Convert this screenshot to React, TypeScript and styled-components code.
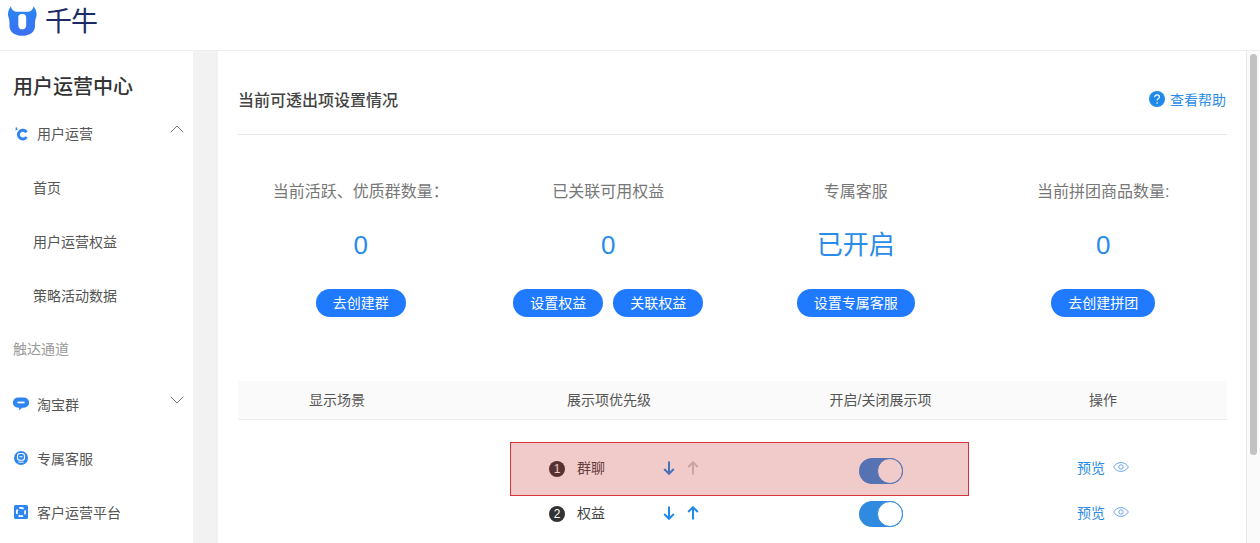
import * as React from 'react'
import styled, { createGlobalStyle } from 'styled-components'
import { ChevronDown, ChevronUp } from 'lucide-react'

const GlobalStyle = createGlobalStyle`
  html, body {
    margin: 0;
    padding: 0;
    height: 543px;
    overflow: hidden;
    background: #fff;
  }
  body {
    font-family: "Liberation Sans", "Noto Sans CJK SC", sans-serif;
    color: #333;
  }
`

const Page = styled.div`
  display: flex;
  flex-direction: column;
  width: 1260px;
  height: 543px;
  overflow: hidden;
`

const Header = styled.header`
  display: flex;
  flex: none;
  align-items: center;
  gap: 8px;
  height: 50px;
  padding: 0 0 9px 8px;
  box-sizing: border-box;
  box-shadow: 0 1px 0 #eee;
`

const Brand = styled.span`
  font-size: 27px;
  line-height: 32px;
  color: #1c2a66;
  letter-spacing: -1px;
  margin-top: 2px;
`

const Body = styled.div`
  display: flex;
  flex: 1;
  min-height: 0;
  margin-top: 1px;
  background: #f2f2f2;
`

const Sidebar = styled.aside`
  flex: none;
  width: 193px;
  background: #fff;
  padding-top: 21px;
  box-sizing: border-box;
`

const SideTitle = styled.div`
  font-size: 20px;
  line-height: 30px;
  font-weight: 500;
  color: #333;
  padding-left: 13px;
  margin-bottom: 4px;
`

const SideRow = styled.div<{ $sub?: boolean; $muted?: boolean }>`
  display: flex;
  align-items: center;
  box-sizing: border-box;
  height: ${(p) => (p.$muted ? '55px' : '54px')};
  padding-bottom: ${(p) => (p.$muted ? '3px' : '0')};
  font-size: 14px;
  color: ${(p) => (p.$muted ? '#999' : '#555')};
  padding-left: ${(p) => (p.$sub ? '33px' : '13px')};
  padding-right: 4px;
`

const SideIcon = styled.span`
  display: flex;
  justify-content: center;
  flex: none;
  width: 16px;
  margin-right: 8px;
`

const SideLabel = styled.span`
  flex: 1;
`

const Chevron = styled.span`
  display: flex;
  color: #777;
  margin-top: -8px;
`

const Main = styled.main`
  flex: 1;
  min-width: 0;
  margin-left: 25px;
  background: #fff;
  padding: 0 19px 0 20px;
  border-right: 1px solid #e8e8e8;
`

const TitleBar = styled.div`
  display: flex;
  align-items: center;
  justify-content: space-between;
  height: 70px;
  padding: 13px 1px 0 0;
  border-bottom: 1px solid #e6e6e6;
`

const Title = styled.h2`
  margin: 0;
  font-size: 16px;
  font-weight: 500;
  color: #444;
`

const HelpLink = styled.a`
  display: flex;
  align-items: center;
  gap: 5px;
  font-size: 14px;
  color: #2a8ce8;
`

const Stats = styled.div`
  display: grid;
  grid-template-columns: repeat(4, 1fr);
  margin-left: -1px;
  padding-top: 47px;
`

const Stat = styled.div`
  display: flex;
  flex-direction: column;
  align-items: center;
`

const StatLabel = styled.div`
  font-size: 16px;
  line-height: 20px;
  color: #777;
`

const StatValue = styled.div`
  font-size: 26px;
  line-height: 30px;
  margin: 28px 0 29px;
  color: #2a8ce8;
`

const ButtonRow = styled.div`
  display: flex;
  gap: 10px;
`

const PillButton = styled.button`
  height: 28px;
  padding: 0 17px;
  border: 0;
  border-radius: 14px;
  background: #1f7aff;
  color: #fff;
  font-family: inherit;
  font-size: 14px;
  line-height: 28px;
`

const Table = styled.div`
  position: relative;
  margin-top: 64px;
`

const HeadRow = styled.div`
  display: grid;
  grid-template-columns: 198px 346px 197px 248px;
  box-sizing: content-box;
  height: 36px;
  padding-bottom: 2px;
  align-items: center;
  justify-items: center;
  background: #fafafa;
  border-bottom: 1px solid #eee;
  font-size: 14px;
  color: #555;
`

const Rows = styled.div`
  padding-top: 26px;
`

const Row = styled.div`
  display: grid;
  grid-template-columns: 198px 346px 197px 248px;
  height: 45px;
  align-items: center;
  font-size: 14px;
  color: #444;
`

const Priority = styled.div`
  grid-column: 2;
  display: flex;
  align-items: center;
  padding-left: 113px;
`

const NumberDot = styled.span`
  flex: none;
  width: 16px;
  height: 16px;
  border-radius: 50%;
  background: #333;
  color: #fff;
  font-size: 12px;
  line-height: 16px;
  text-align: center;
  margin-right: 12px;
`

const PriorityName = styled.span`
  flex: none;
  width: 28px;
  margin-right: 58px;
  padding-bottom: 3px;
`

const MoveButton = styled.span<{ $off?: boolean }>`
  display: flex;
  width: 24px;
  margin-bottom: 1px;
  color: ${(p) => (p.$off ? '#ccc' : '#1f8ae8')};
`

const SwitchCell = styled.div`
  display: flex;
  justify-content: center;
`

const Switch = styled.span<{ $drop: number }>`
  position: relative;
  display: block;
  width: 44px;
  height: 26px;
  margin-top: ${(p) => p.$drop}px;
  border-radius: 13px;
  background: #2f8ae0;
`

const Knob = styled.span`
  position: absolute;
  top: 0;
  right: 0;
  width: 26px;
  height: 26px;
  box-sizing: border-box;
  border: 1px solid #2f8ae0;
  border-radius: 50%;
  background: #fff;
`

const Preview = styled.div`
  display: flex;
  align-items: center;
  justify-content: center;
  gap: 8px;
  padding-bottom: 3px;
  color: #2a8ce8;
`

const Highlight = styled.div`
  position: absolute;
  left: 272px;
  top: 61px;
  width: 457px;
  height: 52px;
  border: 1px solid #d8333a;
  background: rgba(199, 43, 43, 0.25);
`

const Scrollbar = styled.div`
  flex: none;
  width: 13px;
  background: #fafafa;
`

const ScrollThumb = styled.div`
  width: 7px;
  height: 401px;
  margin: 3px 0 0 3px;
  border-radius: 4px;
  background: #c1c1c1;
`

const Logo = () => (
  <svg width="29" height="30" viewBox="0 0 29.500 30">
    <defs>
      <linearGradient id="ox" x1="0" y1="0" x2="0" y2="1">
        <stop offset="0" stopColor="#2b86f0" />
        <stop offset="1" stopColor="#3b6ff5" />
      </linearGradient>
    </defs>
    <path
      fillRule="evenodd"
      fill="url(#ox)"
      d="M3 0C3.500 3 5 5 8 5.500H21C24 5 25.500 3 26 0C28.500 3 29.500 7 29 10C28 13 27.500 14 27.500 17V20C27.500 26 22 30 14.500 30C7 30 1.500 26 1.500 20V17C1.500 14 1 13 .2 10C-.5 7 .5 3 3 0zM14.500 8C11 8 10.500 10 10.500 12V19C10.500 22 12 23.500 14.500 23.500C17 23.500 18.500 22 18.500 19V12C18.500 10 18 8 14.500 8z"
    />
  </svg>
)

const FlowIcon = () => (
  <svg width="14" height="15" viewBox="0 0 14 15">
    <path d="M12.500 6.200A4.400 4.400 0 1 0 12.500 11" fill="none" stroke="#2f86f0" strokeWidth="3" />
    <path d="M2 .5l1.800 3-2.400 1z" fill="#2f86f0" />
  </svg>
)

const ChatIcon = () => (
  <svg width="16" height="14" viewBox="0 0 16 14">
    <path d="M5 .5h6a5 5 0 0 1 0 10.200H9.200L6 13.500l.3-2.800H5A5 5 0 0 1 5 .5z" fill="#2f86f0" />
    <rect x="4.500" y="4.600" width="7" height="1.700" fill="#fff" />
  </svg>
)

const ServiceIcon = () => (
  <svg width="14" height="14" viewBox="0 0 14 14">
    <circle cx="7" cy="7" r="7" fill="#2f86f0" />
    <rect x="3.500" y="2.500" width="7" height="6.800" rx="2.600" fill="none" stroke="#fff" strokeWidth="1.100" />
    <rect x="5.500" y="5.200" width="3" height="1" fill="#fff" />
    <rect x="4.500" y="10.600" width="5" height="1.200" fill="#d6e6ff" />
  </svg>
)

const PlatformIcon = () => (
  <svg width="14" height="14" viewBox="0 0 14 14">
    <rect width="14" height="14" rx="1.500" fill="#2f86f0" />
    <circle cx="7" cy="7" r="4.200" fill="none" stroke="#fff" strokeWidth="1.800" strokeDasharray="4.600 2" strokeDashoffset="2.300" />
  </svg>
)

const HelpIcon = () => (
  <svg width="16" height="16" viewBox="0 0 17 17">
    <circle cx="8.500" cy="8.500" r="8.500" fill="#1f8ae8" />
    <path d="M6 6.600c0-1.600 1.100-2.500 2.600-2.500s2.500.9 2.500 2.200c0 1-.6 1.500-1.400 2-.7.500-1.100.9-1.100 1.900" fill="none" stroke="#fff" strokeWidth="1.200" />
    <circle cx="8.600" cy="12.700" r=".8" fill="#fff" />
  </svg>
)

const EyeIcon = () => (
  <svg width="16" height="10" viewBox="0 0 16 10">
    <path d="M.6 5C2.500 2 5 .6 8 .6S13.500 2 15.400 5C13.500 8 11 9.400 8 9.400S2.500 8 .6 5z" fill="none" stroke="#6ea6ee" strokeWidth="1" />
    <circle cx="8" cy="5" r="2.200" fill="none" stroke="#6ea6ee" strokeWidth="1" />
  </svg>
)

const DownArrow = () => (
  <svg width="12" height="14" viewBox="0 0 12 14">
    <path d="M6 .5V12.500M1.200 8L6 12.800L10.800 8" fill="none" stroke="currentColor" strokeWidth="2" />
  </svg>
)

const UpArrow = () => (
  <svg width="12" height="14" viewBox="0 0 12 14">
    <path d="M6 13.500V1.500M1.200 6L6 1.200L10.800 6" fill="none" stroke="currentColor" strokeWidth="2" />
  </svg>
)

const stats = [
  { label: '当前活跃、优质群数量：', value: '0', actions: ['去创建群'] },
  { label: '已关联可用权益', value: '0', actions: ['设置权益', '关联权益'] },
  { label: '专属客服', value: '已开启', actions: ['设置专属客服'] },
  { label: '当前拼团商品数量:', value: '0', actions: ['去创建拼团'] },
]

const priorities = [
  { no: 1, name: '群聊', upOff: true, drop: 5 },
  { no: 2, name: '权益', upOff: false, drop: 1 },
]

export default function App() {
  return (
    <Page>
      <GlobalStyle />
      <Header>
        <Logo />
        <Brand>千牛</Brand>
      </Header>
      <Body>
        <Sidebar>
          <SideTitle>用户运营中心</SideTitle>
          <SideRow>
            <SideIcon><FlowIcon /></SideIcon>
            <SideLabel>用户运营</SideLabel>
            <Chevron><ChevronUp size={24} strokeWidth={1} /></Chevron>
          </SideRow>
          <SideRow $sub>首页</SideRow>
          <SideRow $sub>用户运营权益</SideRow>
          <SideRow $sub>策略活动数据</SideRow>
          <SideRow $muted>触达通道</SideRow>
          <SideRow>
            <SideIcon><ChatIcon /></SideIcon>
            <SideLabel>淘宝群</SideLabel>
            <Chevron><ChevronDown size={24} strokeWidth={1} /></Chevron>
          </SideRow>
          <SideRow>
            <SideIcon><ServiceIcon /></SideIcon>
            <SideLabel>专属客服</SideLabel>
          </SideRow>
          <SideRow>
            <SideIcon><PlatformIcon /></SideIcon>
            <SideLabel>客户运营平台</SideLabel>
          </SideRow>
        </Sidebar>
        <Main>
          <TitleBar>
            <Title>当前可透出项设置情况</Title>
            <HelpLink><HelpIcon />查看帮助</HelpLink>
          </TitleBar>
          <Stats>
            {stats.map((s) => (
              <Stat key={s.label}>
                <StatLabel>{s.label}</StatLabel>
                <StatValue>{s.value}</StatValue>
                <ButtonRow>
                  {s.actions.map((a) => <PillButton key={a}>{a}</PillButton>)}
                </ButtonRow>
              </Stat>
            ))}
          </Stats>
          <Table>
            <HeadRow>
              <span>显示场景</span>
              <span>展示项优先级</span>
              <span>开启/关闭展示项</span>
              <span>操作</span>
            </HeadRow>
            <Rows>
              {priorities.map((p) => (
                <Row key={p.no}>
                  <Priority>
                    <NumberDot>{p.no}</NumberDot>
                    <PriorityName>{p.name}</PriorityName>
                    <MoveButton><DownArrow /></MoveButton>
                    <MoveButton $off={p.upOff}><UpArrow /></MoveButton>
                  </Priority>
                  <SwitchCell>
                    <Switch $drop={p.drop}><Knob /></Switch>
                  </SwitchCell>
                  <Preview>预览<EyeIcon /></Preview>
                </Row>
              ))}
            </Rows>
            <Highlight />
          </Table>
        </Main>
        <Scrollbar><ScrollThumb /></Scrollbar>
      </Body>
    </Page>
  )
}
